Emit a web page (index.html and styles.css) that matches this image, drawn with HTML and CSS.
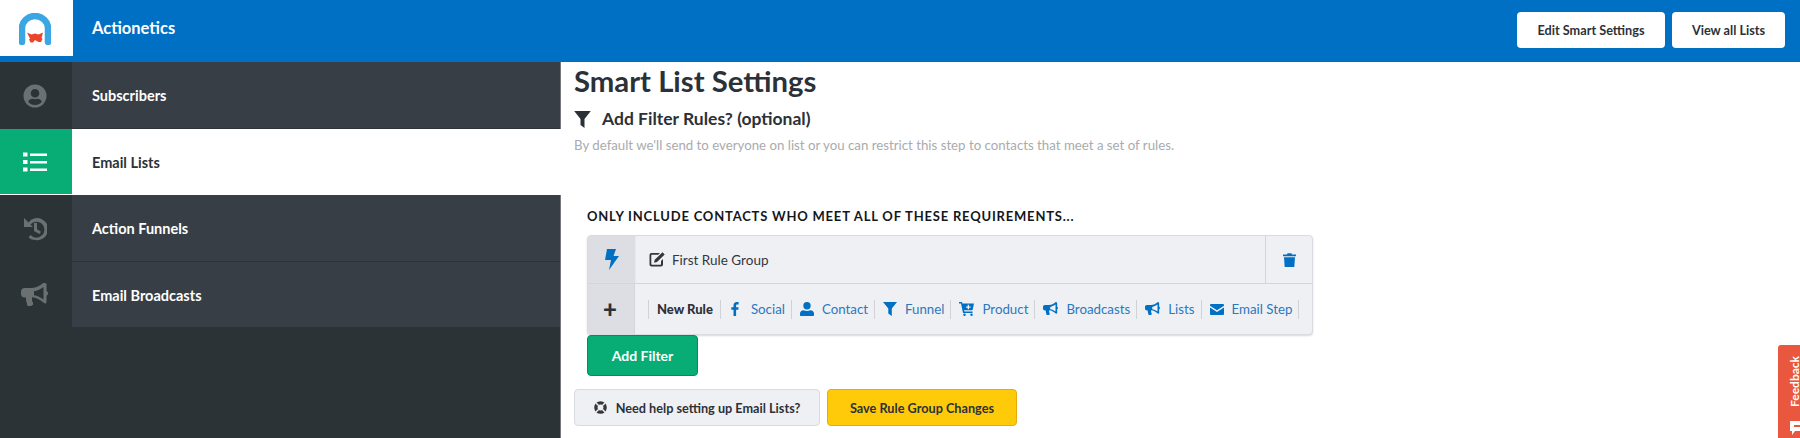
FILE: index.html
```html
<!DOCTYPE html>
<html lang="en">
<head>
<meta charset="utf-8">
<title>Smart List Settings</title>
<link rel="stylesheet" href="styles.css">
</head>
<body>
<header class="topbar">
  <div class="logo">
    <svg width="32" height="32" viewBox="0 0 32 32"><path d="M3 29V15a13 12 0 0 1 26 0V29" fill="none" stroke="#3aa7e4" stroke-width="6.500" stroke-linecap="round"/><path d="M8 19.500l4.500 2 3.500-1 3.500 1 4.500-2-1.500 5.500 1 1-1.500 3h-2.500L16 27l-2 2.500h-2.500l-1.500-3 1-1z" fill="#e8452c"/></svg>
  </div>
  <div class="app-name">Actionetics</div>
  <div class="top-actions">
    <a class="btn-white btn-edit">Edit Smart Settings</a>
    <a class="btn-white btn-view">View all Lists</a>
  </div>
</header>
<div class="layout">
  <nav class="sidebar">
    <a class="nav-item">
      <span class="nav-icon"><svg width="24" height="24" viewBox="0 0 24 24"><path fill="#6b7073" fill-rule="evenodd" d="M12 .5a11.500 11.500 0 1 0 0 23 11.500 11.500 0 0 0 0-23zM12 5a4.300 4.300 0 1 1 0 8.600A4.300 4.300 0 0 1 12 5zm0 16a8.800 8.800 0 0 1-6.800-3.200c.6-2 2.300-3 4.300-3 .8.300 1.600.5 2.500.5s1.700-.2 2.500-.5c2 0 3.700 1 4.300 3A8.800 8.800 0 0 1 12 21z"/></svg></span>
      <span class="nav-label">Subscribers</span>
    </a>
    <a class="nav-item active">
      <span class="nav-icon"><svg width="24" height="20" viewBox="0 0 24 20"><path fill="#fff" d="M0 .5h4.500v4H0zM0 8h4.500v4H0zm0 7.500h4.500v4H0zM7 1.500h17v2.500H7zM7 9h17v2.500H7zm0 7.500h17V19H7z"/></svg></span>
      <span class="nav-label">Email Lists</span>
    </a>
    <a class="nav-item">
      <span class="nav-icon"><svg width="24" height="24" viewBox="0 0 24 24"><path fill="#6b7073" d="M1 1l2.800 2.800 1.600 1.600A11 11 0 1 1 12.500 23a11 11 0 0 1-7-2.500l2-2.500a8 8 0 1 0-.1-10.600l2.600 2.600H1zM11 6h3v6.300l4 2.400-1.400 2.200L11 14z"/></svg></span>
      <span class="nav-label">Action Funnels</span>
    </a>
    <a class="nav-item">
      <span class="nav-icon"><svg width="27" height="24" viewBox="0 0 27 24"><path fill="#6b7073" d="M24 0c1 0 1.500.8 1.500 1.500V8c1 .4 1.500 1.300 1.500 2.300s-.5 2-1.500 2.300v6.400c0 .8-.6 1.500-1.500 1.500-.4 0-.8-.2-1-.4C19 16.500 15.500 14.500 11 14.300v4l1 1v2.500l-2 1.200H6.500L5 17V14.500H3.500C1.500 14.500 0 13 0 11V8.500C0 6.500 1.500 5 3.500 5H11c4.500-.2 8-2.200 12-5.600.3-.2.600-.4 1-.4zm-1.500 4C19.500 6.300 16.500 7.800 13 8.300v4c3.500.5 6.500 2 9.500 4.300z"/></svg></span>
      <span class="nav-label">Email Broadcasts</span>
    </a>
    <div class="nav-rest"></div>
  </nav>
  <main class="content">
    <h1 class="title">Smart List Settings</h1>
    <h2 class="subtitle">
      <svg class="subtitle-icon" width="17" height="17" viewBox="0 0 17 17"><path fill="#2c3138" d="M.2 0h16.600L10.500 8v9l-4-3V8z"/></svg>
      Add Filter Rules? (optional)
    </h2>
    <p class="hint">By default we'll send to everyone on list or you can restrict this step to contacts that meet a set of rules.</p>
    <div class="rules">
      <h3 class="rules-title">ONLY INCLUDE CONTACTS WHO MEET ALL OF THESE REQUIREMENTS...</h3>
      <div class="panel">
        <div class="panel-row row-group">
          <span class="panel-side side-group"><svg width="14" height="21" viewBox="0 0 14 21"><path fill="#0070c4" d="M2 0h9L8.500 7H14L4 21l2-10H0z"/></svg></span>
          <span class="group-name">
            <svg width="16" height="15" viewBox="0 0 16 15"><path fill="#33373c" d="M11 1H2.500A2 2 0 0 0 .5 3v9.500a2 2 0 0 0 2 2H12a2 2 0 0 0 2-2V7l-2 2v3c0 .5-.2.700-.6.700H3c-.5 0-.7-.3-.7-.7V3.500c0-.4.200-.7.700-.7h6.200zM13.500.3L15.700 2.500 8 10l-3 .7.700-3z"/></svg>
            First Rule Group
          </span>
          <span class="trash"><svg width="13" height="14" viewBox="0 0 13 14"><path fill="#0070c4" d="M0 1.500h4L4.500.3h4L9 1.500h4V3.200H0zM1 4.200h11l-.7 9.800H1.700z"/></svg></span>
        </div>
        <div class="panel-row row-new">
          <span class="panel-side side-new">+</span>
          <div class="rule-links">
            <span class="sep"></span>
            <strong class="rule-head">New Rule</strong>
            <span class="sep"></span>
            <a class="rule-link"><svg class="icon-f" width="8" height="14" viewBox="0 0 8 14"><path fill="#0070c4" d="M2.500 14V7.700H.3V5.200h2.200V3.400C2.500 1.300 3.800 0 5.700 0c.9 0 1.700.1 1.900.1v2.300H6.300c-1 0-1.200.5-1.200 1.200v1.600h2.500l-.3 2.500H5.100V14z"/></svg>Social</a>
            <span class="sep"></span>
            <a class="rule-link"><svg width="14" height="14" viewBox="0 0 14 14"><path fill="#0070c4" d="M7 0a3.700 3.700 0 1 1 0 7.400A3.700 3.700 0 0 1 7 0zM3.500 8.200c1 .5 2.200.8 3.500.8s2.500-.3 3.500-.8c2 .2 3.500 1.500 3.500 3.300V13c0 .6-.4 1-1 1H1c-.6 0-1-.4-1-1v-1.500c0-1.800 1.500-3.100 3.500-3.300z"/></svg>Contact</a>
            <span class="sep"></span>
            <a class="rule-link"><svg width="14" height="14" viewBox="0 0 14 14"><path fill="#0070c4" d="M0 0h14L8.800 6.500V14l-3.500-2.500v-5z"/></svg>Funnel</a>
            <span class="sep"></span>
            <a class="rule-link"><svg width="15" height="14" viewBox="0 0 15 14"><path fill="#0070c4" fill-rule="evenodd" d="M0 0h3l.4 1.500H15l-1.500 6.800H5l.3 1.200h8.200V11H4L2 1.500H0zM8.700 2.800v1.600H7.100v1.300h1.600v1.600H10V5.700h1.600V4.400H10V2.800zM5.500 11.500a1.200 1.200 0 1 1 0 2.500 1.200 1.200 0 0 1 0-2.500zm7 0a1.200 1.200 0 1 1 0 2.500 1.200 1.200 0 0 1 0-2.500z"/></svg>Product</a>
            <span class="sep"></span>
            <a class="rule-link"><svg width="15" height="14" viewBox="0 0 27 24"><path fill="#0070c4" d="M24 0c1 0 1.500.8 1.500 1.500V8c1 .4 1.500 1.300 1.500 2.300s-.5 2-1.500 2.300v6.400c0 .8-.6 1.500-1.500 1.500-.4 0-.8-.2-1-.4C19 16.500 15.500 14.500 11 14.300v4l1 1v2.500l-2 1.200H6.500L5 17V14.500H3.500C1.500 14.500 0 13 0 11V8.500C0 6.500 1.500 5 3.500 5H11c4.500-.2 8-2.200 12-5.600.3-.2.600-.4 1-.4zm-1.500 4C19.500 6.300 16.500 7.800 13 8.300v4c3.500.5 6.500 2 9.500 4.300z"/></svg>Broadcasts</a>
            <span class="sep"></span>
            <a class="rule-link"><svg width="15" height="14" viewBox="0 0 27 24"><path fill="#0070c4" d="M24 0c1 0 1.500.8 1.500 1.500V8c1 .4 1.500 1.300 1.500 2.300s-.5 2-1.500 2.300v6.400c0 .8-.6 1.500-1.500 1.500-.4 0-.8-.2-1-.4C19 16.500 15.500 14.500 11 14.300v4l1 1v2.500l-2 1.200H6.500L5 17V14.500H3.500C1.500 14.500 0 13 0 11V8.500C0 6.500 1.500 5 3.500 5H11c4.500-.2 8-2.200 12-5.600.3-.2.600-.4 1-.4zm-1.500 4C19.500 6.300 16.500 7.800 13 8.300v4c3.500.5 6.500 2 9.500 4.300z"/></svg>Lists</a>
            <span class="sep"></span>
            <a class="rule-link"><svg width="14" height="11" viewBox="0 0 14 11"><path fill="#0070c4" d="M1.300 0h11.400C13.500 0 14 .5 14 1.300v.4L7 6.300 0 1.700v-.4C0 .5.500 0 1.300 0zM0 3.400l7 4.500 7-4.500v6.300c0 .8-.5 1.300-1.300 1.300H1.300C.5 11 0 10.500 0 9.700z"/></svg>Email Step</a>
            <span class="sep"></span>
          </div>
        </div>
      </div>
      <a class="btn-add">Add Filter</a>
    </div>
    <div class="footer-actions">
      <a class="btn-help"><svg width="13" height="13" viewBox="0 0 13 13"><circle cx="6.500" cy="6.500" r="4.600" fill="none" stroke="#33373c" stroke-width="3.400"/><path stroke="#eff0f3" stroke-width="1.500" d="M2 2l2.500 2.500M11 2L8.500 4.500M2 11l2.500-2.500M11 11L8.500 8.500"/></svg>Need help setting up Email Lists?</a>
      <a class="btn-save">Save Rule Group Changes</a>
    </div>
  </main>
</div>
<a class="feedback"><span class="feedback-text">Feedback</span><svg class="feedback-icon" width="14" height="14" viewBox="0 0 14 14"><path fill="#fff" fill-rule="evenodd" d="M0 0h14v10H5l-3 4v-4H0zM4 4v2h6V4z"/></svg></a>
</body>
</html>
```

FILE: styles.css
```css
* { box-sizing: border-box; }
html, body { height: 100%; }
body {
  margin: 0;
  height: 438px;
  overflow: hidden;
  background: #fff;
  color: #2c3138;
  font-family: "Lato", "Open Sans", sans-serif;
  position: relative;
}
a { text-decoration: none; }
.topbar {
  height: 62px;
  background: #0070c4;
  display: flex;
  align-items: flex-start;
}
.logo {
  width: 73px;
  height: 56px;
  background: #fff;
  display: flex;
  align-items: center;
  justify-content: center;
  padding: 2px 4px 0 0;
}
.app-name {
  margin-left: 19px;
  height: 56px;
  line-height: 56px;
  color: #fff;
  font-size: 16.500px;
  font-weight: 700;
}
.top-actions {
  margin-left: auto;
  margin-right: 15px;
  padding-top: 12px;
  display: flex;
  gap: 7px;
}
.btn-white {
  height: 36px;
  line-height: 36px;
  background: #fff;
  border-radius: 4px;
  text-align: center;
  color: #2c3138;
  font-size: 12.700px;
  font-weight: 700;
}
.btn-edit { width: 148px; }
.btn-view { width: 113px; }
.layout {
  display: flex;
  height: 376px;
}
.sidebar {
  width: 561px;
  flex: none;
  display: flex;
  flex-direction: column;
  background: #2c3336;
  border-right: 1px solid #75787c;
}
.nav-item {
  height: 66.500px;
  flex: none;
  display: flex;
  align-items: stretch;
  background: #383e45;
  border-bottom: 1px solid #2e3338;
  color: #fff;
}
.nav-icon {
  width: 72px;
  flex: none;
  background: #2c3336;
  display: flex;
  align-items: center;
  justify-content: center;
  padding: 2px 3px 0 0;
}
.nav-label {
  padding: 2px 0 0 20px;
  display: flex;
  align-items: center;
  font-size: 14.500px;
  font-weight: 700;
}
.nav-item.active { background: #fff; color: #2c3138; border-bottom-color: #fff; margin-right: -1px; }
.nav-item.active .nav-icon { background: #07ad75; }
.nav-rest { flex: 1; }
.content {
  flex: 1;
  padding: 2px 0 0 13px;
}
.title {
  margin: 0;
  font-size: 29.300px;
  line-height: 34px;
  font-weight: 700;
  color: #2c3138;
}
.subtitle {
  margin: 10px 0 0;
  display: flex;
  align-items: center;
  font-size: 17.500px;
  line-height: 22px;
  font-weight: 700;
  color: #2c3138;
}
.subtitle-icon { margin-right: 11px; }
.hint {
  margin: 6px 0 0;
  font-size: 13.250px;
  line-height: 18px;
  color: #a9abae;
}
.rules {
  margin: 53px 0 0 13px;
}
.rules-title {
  margin: 0 0 10px;
  font-size: 13px;
  line-height: 18px;
  font-weight: 700;
  letter-spacing: .8px;
  color: #14171c;
}
.panel {
  width: 726px;
  background: #eff0f4;
  border: 1px solid #d9dbe0;
  border-radius: 4px;
  box-shadow: 0 1px 2px rgba(0,0,0,.15);
  overflow: hidden;
}
.panel-row { display: flex; align-items: stretch; }
.row-group { height: 48px; border-bottom: 1px solid #d3d5da; }
.row-new { height: 50px; }
.panel-side {
  flex: none;
  background: #dcdee3;
  display: flex;
  align-items: center;
  justify-content: center;
}
.side-group { width: 48px; border-right: 1px solid #e8e9ed; }
.side-new {
  width: 47px;
  border-right: 1px solid #d3d5da;
  font-size: 24px;
  font-weight: 900;
  color: #2c3138;
  padding: 0 2px 2px 0;
}
.group-name {
  flex: 1;
  padding-left: 13px;
  display: flex;
  align-items: center;
  gap: 7px;
  font-size: 13.500px;
  color: #33373c;
}
.trash {
  width: 47px;
  border-left: 1px solid #d3d5da;
  display: flex;
  align-items: center;
  justify-content: center;
}
.rule-links {
  flex: 1;
  padding-left: 13px;
  display: flex;
  align-items: center;
  font-size: 13.300px;
}
.sep { width: 1px; height: 19px; background: #d0d2d7; flex: none; }
.rule-head { padding: 0 7px 0 8px; font-weight: 900; color: #2c3138; font-size: 13px; }
.rule-link {
  display: flex;
  align-items: center;
  gap: 8px;
  color: #2b78bf;
  padding: 0 6px 0 8px;
  white-space: nowrap;
}
.icon-f { margin: 0 4px 0 2px; }
.btn-add {
  display: block;
  width: 111px;
  height: 41px;
  line-height: 39px;
  text-align: center;
  background: #07ad75;
  border: 1px solid #068a5e;
  border-radius: 4px;
  color: #fff;
  font-size: 14px;
  font-weight: 700;
}
.footer-actions {
  margin-top: 13px;
  display: flex;
  gap: 7px;
}
.btn-help, .btn-save {
  height: 37px;
  border-radius: 4px;
  font-size: 12.700px;
  font-weight: 700;
  display: flex;
  align-items: center;
  justify-content: center;
  color: #2c3138;
}
.btn-help {
  width: 246px;
  gap: 9px;
  background: #eff0f3;
  border: 1px solid #d9dbe0;
}
.btn-save {
  width: 190px;
  background: #ffca0a;
  border: 1px solid #e5ac0c;
}
.feedback {
  position: absolute;
  right: 0;
  top: 345px;
  width: 22px;
  height: 93px;
  padding: 11px 0 0 12px;
  background: #e9573f;
  border-radius: 3px 0 0 0;
  color: #fff;
  display: flex;
  flex-direction: column;
  align-items: flex-start;
  overflow: hidden;
}
.feedback-text {
  writing-mode: vertical-rl;
  transform: rotate(180deg);
  font-size: 12px;
  font-weight: 700;
  line-height: 10px;
}
.feedback-icon { margin-top: 14px; flex: none; }
```
